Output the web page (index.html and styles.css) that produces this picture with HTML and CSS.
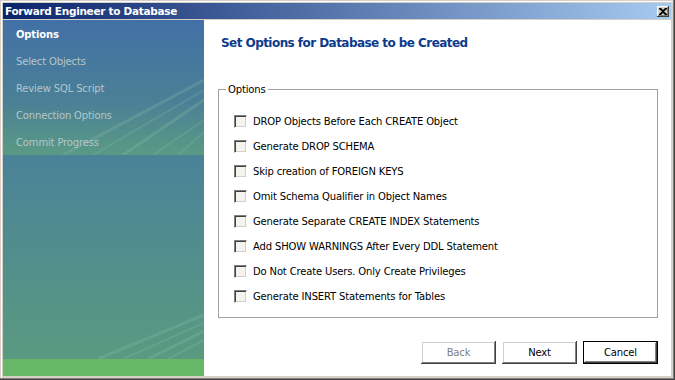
FILE: index.html
```html
<!DOCTYPE html>
<html>
<head>
<meta charset="utf-8">
<link rel="stylesheet" href="styles.css">
</head>
<body>
<div class="window">
  <div class="titlebar">
    <span class="title">Forward Engineer to Database</span>
    <span class="close">
      <svg width="8" height="7" viewBox="0 0 8 7"><path d="M0 0h2l2 2 2-2h2v1L5 3.5 8 6v1H6L4 5 2 7H0V6l3-2.5L0 1z" fill="#000"/></svg>
    </span>
  </div>
  <div class="body">
    <aside class="sidebar">
      <div class="steps">
        <svg class="swoosh" width="201" height="135" viewBox="0 0 201 135">
          <path d="M201 60 L60 135" stroke="#7fb0a8" stroke-opacity=".35" stroke-width="3" fill="none"/>
          <path d="M201 70 L90 135" stroke="#7fb0a8" stroke-opacity=".3" stroke-width="2" fill="none"/>
          <path d="M201 80 L120 135" stroke="#80b4a0" stroke-opacity=".35" stroke-width="3" fill="none"/>
          <path d="M201 100 L150 135" stroke="#80b4a0" stroke-opacity=".3" stroke-width="2" fill="none"/>
          <path d="M201 112 L175 135" stroke="#80b4a0" stroke-opacity=".3" stroke-width="2" fill="none"/>
        </svg>
        <div class="step active">Options</div>
        <div class="step">Select Objects</div>
        <div class="step">Review SQL Script</div>
        <div class="step">Connection Options</div>
        <div class="step">Commit Progress</div>
      </div>
      <div class="lower">
        <svg class="swoosh" width="201" height="204" viewBox="0 0 201 204">
          <path d="M201 160 L95 204" stroke="#7fb8a0" stroke-opacity=".35" stroke-width="3" fill="none"/>
          <path d="M201 168 L120 204" stroke="#7fb8a0" stroke-opacity=".3" stroke-width="2" fill="none"/>
          <path d="M201 176 L145 204" stroke="#7fb8a0" stroke-opacity=".35" stroke-width="3" fill="none"/>
          <path d="M201 185 L165 204" stroke="#7fb8a0" stroke-opacity=".3" stroke-width="2" fill="none"/>
        </svg>
      </div>
      <div class="green"></div>
    </aside>
    <main class="content">
      <h1 class="heading">Set Options for Database to be Created</h1>
      <fieldset class="group">
        <legend>Options</legend>
        <label class="opt"><span class="cb"></span>DROP Objects Before Each CREATE Object</label>
        <label class="opt"><span class="cb"></span>Generate DROP SCHEMA</label>
        <label class="opt"><span class="cb"></span>Skip creation of FOREIGN KEYS</label>
        <label class="opt"><span class="cb"></span>Omit Schema Qualifier in Object Names</label>
        <label class="opt"><span class="cb"></span>Generate Separate CREATE INDEX Statements</label>
        <label class="opt"><span class="cb"></span>Add SHOW WARNINGS After Every DDL Statement</label>
        <label class="opt"><span class="cb"></span>Do Not Create Users. Only Create Privileges</label>
        <label class="opt"><span class="cb"></span>Generate INSERT Statements for Tables</label>
      </fieldset>
      <div class="buttons">
        <button class="btn disabled">Back</button>
        <button class="btn">Next</button>
        <button class="btn default">Cancel</button>
      </div>
    </main>
  </div>
</div>
</body>
</html>
```
FILE: styles.css
```css
* { box-sizing: border-box; }
html, body { margin: 0; padding: 0; }
body {
  background: #d4d0c8;
  font-family: "DejaVu Sans", Verdana, sans-serif;
  font-size: 10px;
}
.window {
  width: 675px;
  height: 380px;
  background: #d4d0c8;
  padding: 3px 4px 4px 3px;
  box-shadow: inset -1px -1px 0 #404040, inset -2px -2px 0 #808080, inset 1px 1px 0 #d4d0c8, inset 2px 2px 0 #ffffff;
  display: flex;
  flex-direction: column;
}
.titlebar {
  height: 16px;
  margin-bottom: 1px;
  background: linear-gradient(to right, #0a246a, #a6caf0);
  display: flex;
  align-items: center;
  justify-content: space-between;
  padding: 0 2px 0 2px;
}
.title {
  color: #fff;
  font-weight: bold;
  font-size: 10.5px;
  letter-spacing: -0.3px;
}
.close {
  width: 12px;
  height: 11px;
  background: #d4d0c8;
  box-shadow: inset -1px -1px 0 #404040, inset 1px 1px 0 #fff, inset -2px -2px 0 #808080;
  display: flex;
  align-items: center;
  justify-content: center;
}
.body {
  flex: 1;
  display: flex;
  min-height: 0;
}
.sidebar {
  width: 201px;
  display: flex;
  flex-direction: column;
}
.steps {
  position: relative;
  height: 135px;
  background: linear-gradient(to bottom, #4270a6, #4a8096 60%, #5a9a84);
  padding: 1px 0 0 13px;
  overflow: hidden;
}
.swoosh { position: absolute; left: 0; top: 0; }
.step {
  position: relative;
  height: 27px;
  line-height: 27px;
  color: #b4c6cc;
  font-size: 10px;
  letter-spacing: -0.15px;
}
.step.active { color: #fff; font-weight: bold; }
.lower {
  position: relative;
  flex: 1;
  background: linear-gradient(to bottom, #4a8298, #5a9a80);
  overflow: hidden;
}
.green {
  height: 17px;
  background: #66b866;
}
.content {
  flex: 1;
  background: #fff;
  padding: 0 13px 0 14px;
  display: flex;
  flex-direction: column;
}
.heading {
  margin: 16px 0 0 3px;
  font-size: 12px;
  font-weight: bold;
  color: #0c3a8c;
  letter-spacing: -0.55px;
}
.group {
  margin: 34px 0 0 0;
  border: 1px solid #a0a0a0;
  padding: 14px 0 10px 15px;
  height: 234px;
}
.group legend {
  padding: 0 2px;
  margin-left: -8px;
  font-size: 10px;
  color: #000;
  letter-spacing: -0.15px;
}
.opt {
  display: flex;
  align-items: center;
  height: 25px;
  font-size: 10px;
  letter-spacing: -0.15px;
  color: #000;
}
.cb {
  width: 13px;
  height: 13px;
  margin-right: 6px;
  background: #f4f3ee;
  border: 1px solid;
  border-color: #808080 #ffffff #ffffff #808080;
  box-shadow: inset 1px 1px 0 #404040, inset -1px -1px 0 #d4d0c8;
}
.buttons {
  display: flex;
  justify-content: flex-end;
  gap: 6px;
  margin-top: 23px;
}
.btn {
  width: 75px;
  height: 23px;
  background: #fff;
  border: none;
  font-family: "DejaVu Sans", Verdana, sans-serif;
  font-size: 10px;
  letter-spacing: -0.15px;
  color: #000;
  box-shadow: inset -1px -1px 0 #404040, inset 1px 1px 0 #ffffff, inset -2px -2px 0 #808080, inset 2px 2px 0 #d4d0c8;
  padding: 0;
}
.btn.disabled { color: #808080; }
.btn.default {
  box-shadow: inset 0 0 0 1px #000, inset -2px -2px 0 #404040, inset 2px 2px 0 #ffffff, inset -3px -3px 0 #808080;
}
```
